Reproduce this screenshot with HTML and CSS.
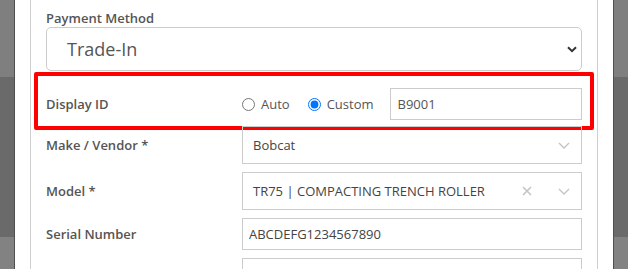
FILE: index.html
```html
<!DOCTYPE html>
<html lang="en">
<head>
    <meta charset="UTF-8">
    <meta name="viewport" content="width=device-width, initial-scale=1.0">
    <title>Equipment Trade-In</title>
    <link rel="stylesheet" href="styles.css">
</head>
<body>

<div class="modal">
    <div class="panel">
        <div class="stacked">
            <label class="label">Payment Method</label>
            <div class="select-lg">
                <span>Trade-In</span>
                <svg class="caret-dark" width="10" height="7" viewBox="0 0 10 7">
                    <path d="M1 1.2 L5 5.2 L9 1.2" fill="none" stroke="#333" stroke-width="2"/>
                </svg>
            </div>
        </div>

        <div class="row row-display">
            <label class="label">Display ID</label>
            <div class="field radios">
                <label class="radio"><input type="radio" name="displayId"> Auto</label>
                <label class="radio"><input type="radio" name="displayId" checked> Custom</label>
                <input class="text-input" type="text" value="B9001">
            </div>
            <div class="highlight"></div>
        </div>

        <div class="row row-make">
            <label class="label">Make / Vendor *</label>
            <div class="field select2">
                <span class="value">Bobcat</span>
                <svg class="caret" width="12" height="7" viewBox="0 0 12 7">
                    <path d="M1 1 L6 6 L11 1" fill="none" stroke="#c4c4c4" stroke-width="1.4"/>
                </svg>
            </div>
        </div>

        <div class="row row-model">
            <label class="label">Model *</label>
            <div class="field select2">
                <span class="value">TR75 | COMPACTING TRENCH ROLLER</span>
                <svg class="clear" width="10" height="10" viewBox="0 0 10 10">
                    <path d="M1 1 L9 9 M9 1 L1 9" fill="none" stroke="#c4c4c4" stroke-width="1.6"/>
                </svg>
                <svg class="caret" width="12" height="7" viewBox="0 0 12 7">
                    <path d="M1 1 L6 6 L11 1" fill="none" stroke="#c4c4c4" stroke-width="1.4"/>
                </svg>
            </div>
        </div>

        <div class="row row-serial">
            <label class="label">Serial Number</label>
            <input class="field text-input serial" type="text" value="ABCDEFG1234567890">
        </div>

        <div class="row row-next">
            <label class="label">Model Year</label>
            <input class="field text-input serial" type="text" value="">
        </div>
    </div>
</div>

</body>
</html>
```

FILE: styles.css
```css
body {
    margin: 0;
    height: 269px;
    overflow: hidden;
    font-family: "Open Sans", "Liberation Sans", sans-serif;
    font-size: 13px;
    color: #555;
    background: linear-gradient(to bottom, #7f7f7f 0, #7f7f7f 77px, #6a6a6a 77px, #6a6a6a 237px, #828282 237px);
}
.modal {
    margin: 0 15px;
    height: 269px;
    background-color: #fff;
    box-shadow: -1px 0 0 #4f4f4f, 1px 0 0 #4f4f4f;
}
.panel {
    margin: 0 15px;
    height: 100%;
    padding: 9px 15px 0;
    border-left: 1px solid #cfcfcf;
    border-right: 1px solid #cfcfcf;
}
.label {
    display: block;
    font-weight: 600;
    line-height: 18px;
    color: #555;
}
.select-lg {
    display: flex;
    align-items: center;
    justify-content: space-between;
    height: 44px;
    box-sizing: border-box;
    padding: 0 4px 0 20px;
    border: 1px solid #ccc;
    border-radius: 5px;
    font-size: 18px;
    color: #555;
}
.row {
    position: relative;
    display: grid;
    grid-template-columns: 196px 1fr;
    align-items: center;
}
.row-display {
    margin-top: 17px;
    height: 32px;
}
.row-make {
    margin-top: 6px;
}
.row-model, .row-serial, .row-next {
    margin-top: 8px;
}
.radios {
    display: flex;
    align-items: center;
}
.radio {
    display: flex;
    align-items: center;
    gap: 6px;
    margin-right: 18px;
    line-height: 18px;
}
.radio:nth-child(2) {
    margin-right: 16px;
}
.radio input {
    margin: 0;
    width: 13px;
    height: 13px;
}
.text-input {
    flex: 1;
    min-width: 0;
    height: 32px;
    box-sizing: border-box;
    padding: 0 7px;
    border: 1px solid #ccc;
    border-radius: 0;
    font-family: inherit;
    font-size: 13px;
    color: #555;
    outline: none;
}
.serial {
    width: 100%;
    padding-left: 6px;
    color: #444;
}
.select2 {
    display: flex;
    align-items: center;
    height: 38px;
    box-sizing: border-box;
    padding: 0 11px 0 10px;
    border: 1px solid #ccc;
    color: #444;
}
.select2 .value {
    flex: 1;
}
.clear {
    margin-right: 26px;
}
.highlight {
    position: absolute;
    left: -12px;
    right: -12px;
    top: -16px;
    bottom: -10px;
    border: 4px solid #ff0000;
    border-radius: 2px;
    pointer-events: none;
}
```
